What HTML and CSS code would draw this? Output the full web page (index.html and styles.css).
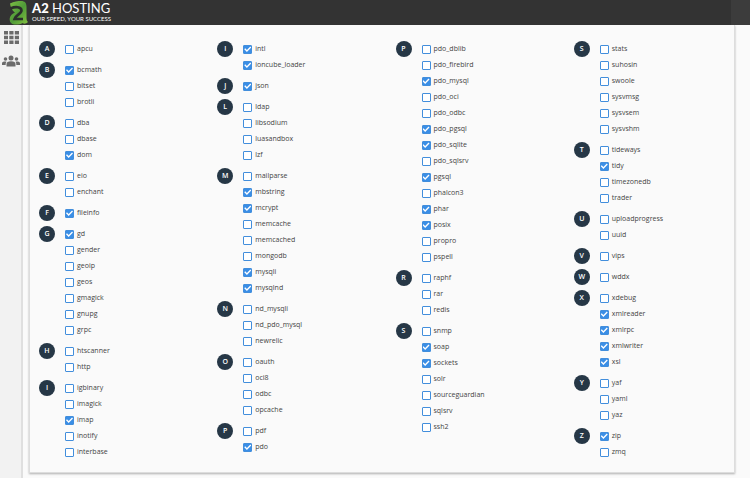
FILE: index.html
```html
<!DOCTYPE html>
<html lang="en">
<head>
    <meta charset="UTF-8">
    <meta name="viewport" content="width=device-width, initial-scale=1.0">
    <title>A2 Hosting - PHP Extensions</title>
    <link rel="stylesheet" href="styles.css">
</head>
<body>
    <header class="topbar">
        <a class="brand" href="#">
            <svg class="brand-mark" viewBox="0 0 20 25" aria-hidden="true">
                <defs>
                    <linearGradient id="leaf" x1="0" y1="0" x2="1" y2="1">
                        <stop offset="0" stop-color="#7fbf45"/>
                        <stop offset="0.5" stop-color="#4f9a38"/>
                        <stop offset="1" stop-color="#86c440"/>
                    </linearGradient>
                </defs>
                <path fill="url(#leaf)" d="M1 3.500C5 1.500 9 1 12 1C16 1 17.500 3 17.500 7V18C17.500 20 18 21 19 22C17 24 15 24 13.500 23C11 24.600 6 25 3.500 24C1 23 0.300 20.500 0.800 18C1.300 15.500 3.500 13.500 6 12.500C4 11 2 9 1 3.500Z"/>
                <path fill="none" stroke="#2b2f2b" stroke-width="2.600" d="M1.500 8.500C6 6.500 12.500 6.500 12.500 10.500C12.500 14 6.500 15 5.500 19H14"/>
            </svg>
            <span class="brand-text">
                <span class="brand-name"><b>A2</b> HOSTING</span>
                <span class="brand-tagline">OUR SPEED, YOUR SUCCESS</span>
            </span>
        </a>
        <div class="topbar-end"></div>
    </header>
    <div class="page">
        <nav class="sidebar">
            <a href="#" aria-label="Tools">
                <svg width="15" height="13" viewBox="0 0 15 13" fill="#6b6b6b">
                    <path d="M0 0h4v3.500H0zM5.300 0h4.200v3.500H5.300zM10.800 0H15v3.500h-4.200zM0 4.700h4v3.500H0zM5.300 4.700h4.200v3.500H5.300zM10.800 4.700H15v3.500h-4.200zM0 9.400h4V13H0zM5.300 9.400h4.200V13H5.300zM10.800 9.400H15V13h-4.200z"/>
                </svg>
            </a>
            <a href="#" aria-label="Users">
                <svg width="18" height="12" viewBox="0 0 18 12" fill="#6b6b6b">
                    <circle cx="9" cy="3" r="2.500"/>
                    <circle cx="3.500" cy="4" r="1.800"/>
                    <circle cx="14.500" cy="4" r="1.800"/>
                    <path d="M4.500 11.500V9C4.500 7 6 6.200 9 6.200S13.500 7 13.500 9V11.500Z"/>
                    <path d="M0 10V8.500C0 7 1 6.500 3.500 6.500L4.500 6.700C3.800 7.500 3.600 8.500 3.700 10ZM18 10V8.500C18 7 17 6.500 14.500 6.500L13.500 6.700C14.200 7.500 14.400 8.500 14.300 10Z"/>
                </svg>
            </a>
        </nav>
        <main class="content">
            <form class="card">
                <div class="column">
                    <section class="group">
                        <h2 class="letter">A</h2>
                        <div class="items">
                            <label><input type="checkbox">apcu</label>
                        </div>
                    </section>
                    <section class="group">
                        <h2 class="letter">B</h2>
                        <div class="items">
                            <label><input type="checkbox" checked>bcmath</label>
                            <label><input type="checkbox">bitset</label>
                            <label><input type="checkbox">brotli</label>
                        </div>
                    </section>
                    <section class="group">
                        <h2 class="letter">D</h2>
                        <div class="items">
                            <label><input type="checkbox">dba</label>
                            <label><input type="checkbox">dbase</label>
                            <label><input type="checkbox" checked>dom</label>
                        </div>
                    </section>
                    <section class="group">
                        <h2 class="letter">E</h2>
                        <div class="items">
                            <label><input type="checkbox">eio</label>
                            <label><input type="checkbox">enchant</label>
                        </div>
                    </section>
                    <section class="group">
                        <h2 class="letter">F</h2>
                        <div class="items">
                            <label><input type="checkbox" checked>fileinfo</label>
                        </div>
                    </section>
                    <section class="group">
                        <h2 class="letter">G</h2>
                        <div class="items">
                            <label><input type="checkbox" checked>gd</label>
                            <label><input type="checkbox">gender</label>
                            <label><input type="checkbox">geoip</label>
                            <label><input type="checkbox">geos</label>
                            <label><input type="checkbox">gmagick</label>
                            <label><input type="checkbox">gnupg</label>
                            <label><input type="checkbox">grpc</label>
                        </div>
                    </section>
                    <section class="group">
                        <h2 class="letter">H</h2>
                        <div class="items">
                            <label><input type="checkbox">htscanner</label>
                            <label><input type="checkbox">http</label>
                        </div>
                    </section>
                    <section class="group">
                        <h2 class="letter">I</h2>
                        <div class="items">
                            <label><input type="checkbox">igbinary</label>
                            <label><input type="checkbox">imagick</label>
                            <label><input type="checkbox" checked>imap</label>
                            <label><input type="checkbox">inotify</label>
                            <label><input type="checkbox">interbase</label>
                        </div>
                    </section>
                </div>
                <div class="column">
                    <section class="group">
                        <h2 class="letter">I</h2>
                        <div class="items">
                            <label><input type="checkbox" checked>intl</label>
                            <label><input type="checkbox" checked>ioncube_loader</label>
                        </div>
                    </section>
                    <section class="group">
                        <h2 class="letter">J</h2>
                        <div class="items">
                            <label><input type="checkbox" checked>json</label>
                        </div>
                    </section>
                    <section class="group">
                        <h2 class="letter">L</h2>
                        <div class="items">
                            <label><input type="checkbox">ldap</label>
                            <label><input type="checkbox">libsodium</label>
                            <label><input type="checkbox">luasandbox</label>
                            <label><input type="checkbox">lzf</label>
                        </div>
                    </section>
                    <section class="group">
                        <h2 class="letter">M</h2>
                        <div class="items">
                            <label><input type="checkbox">mailparse</label>
                            <label><input type="checkbox" checked>mbstring</label>
                            <label><input type="checkbox" checked>mcrypt</label>
                            <label><input type="checkbox">memcache</label>
                            <label><input type="checkbox">memcached</label>
                            <label><input type="checkbox">mongodb</label>
                            <label><input type="checkbox" checked>mysqli</label>
                            <label><input type="checkbox" checked>mysqlnd</label>
                        </div>
                    </section>
                    <section class="group">
                        <h2 class="letter">N</h2>
                        <div class="items">
                            <label><input type="checkbox">nd_mysqli</label>
                            <label><input type="checkbox">nd_pdo_mysql</label>
                            <label><input type="checkbox">newrelic</label>
                        </div>
                    </section>
                    <section class="group">
                        <h2 class="letter">O</h2>
                        <div class="items">
                            <label><input type="checkbox">oauth</label>
                            <label><input type="checkbox">oci8</label>
                            <label><input type="checkbox">odbc</label>
                            <label><input type="checkbox">opcache</label>
                        </div>
                    </section>
                    <section class="group">
                        <h2 class="letter">P</h2>
                        <div class="items">
                            <label><input type="checkbox">pdf</label>
                            <label><input type="checkbox" checked>pdo</label>
                        </div>
                    </section>
                </div>
                <div class="column">
                    <section class="group">
                        <h2 class="letter">P</h2>
                        <div class="items">
                            <label><input type="checkbox">pdo_dblib</label>
                            <label><input type="checkbox">pdo_firebird</label>
                            <label><input type="checkbox" checked>pdo_mysql</label>
                            <label><input type="checkbox">pdo_oci</label>
                            <label><input type="checkbox">pdo_odbc</label>
                            <label><input type="checkbox" checked>pdo_pgsql</label>
                            <label><input type="checkbox" checked>pdo_sqlite</label>
                            <label><input type="checkbox">pdo_sqlsrv</label>
                            <label><input type="checkbox" checked>pgsql</label>
                            <label><input type="checkbox">phalcon3</label>
                            <label><input type="checkbox" checked>phar</label>
                            <label><input type="checkbox" checked>posix</label>
                            <label><input type="checkbox">propro</label>
                            <label><input type="checkbox">pspell</label>
                        </div>
                    </section>
                    <section class="group">
                        <h2 class="letter">R</h2>
                        <div class="items">
                            <label><input type="checkbox">raphf</label>
                            <label><input type="checkbox">rar</label>
                            <label><input type="checkbox">redis</label>
                        </div>
                    </section>
                    <section class="group">
                        <h2 class="letter">S</h2>
                        <div class="items">
                            <label><input type="checkbox">snmp</label>
                            <label><input type="checkbox" checked>soap</label>
                            <label><input type="checkbox" checked>sockets</label>
                            <label><input type="checkbox">solr</label>
                            <label><input type="checkbox">sourceguardian</label>
                            <label><input type="checkbox">sqlsrv</label>
                            <label><input type="checkbox">ssh2</label>
                        </div>
                    </section>
                </div>
                <div class="column">
                    <section class="group">
                        <h2 class="letter">S</h2>
                        <div class="items">
                            <label><input type="checkbox">stats</label>
                            <label><input type="checkbox">suhosin</label>
                            <label><input type="checkbox">swoole</label>
                            <label><input type="checkbox">sysvmsg</label>
                            <label><input type="checkbox">sysvsem</label>
                            <label><input type="checkbox">sysvshm</label>
                        </div>
                    </section>
                    <section class="group">
                        <h2 class="letter">T</h2>
                        <div class="items">
                            <label><input type="checkbox">tideways</label>
                            <label><input type="checkbox" checked>tidy</label>
                            <label><input type="checkbox">timezonedb</label>
                            <label><input type="checkbox">trader</label>
                        </div>
                    </section>
                    <section class="group">
                        <h2 class="letter">U</h2>
                        <div class="items">
                            <label><input type="checkbox">uploadprogress</label>
                            <label><input type="checkbox">uuid</label>
                        </div>
                    </section>
                    <section class="group">
                        <h2 class="letter">V</h2>
                        <div class="items">
                            <label><input type="checkbox">vips</label>
                        </div>
                    </section>
                    <section class="group">
                        <h2 class="letter">W</h2>
                        <div class="items">
                            <label><input type="checkbox">wddx</label>
                        </div>
                    </section>
                    <section class="group">
                        <h2 class="letter">X</h2>
                        <div class="items">
                            <label><input type="checkbox">xdebug</label>
                            <label><input type="checkbox" checked>xmlreader</label>
                            <label><input type="checkbox" checked>xmlrpc</label>
                            <label><input type="checkbox" checked>xmlwriter</label>
                            <label><input type="checkbox" checked>xsl</label>
                        </div>
                    </section>
                    <section class="group">
                        <h2 class="letter">Y</h2>
                        <div class="items">
                            <label><input type="checkbox">yaf</label>
                            <label><input type="checkbox">yaml</label>
                            <label><input type="checkbox">yaz</label>
                        </div>
                    </section>
                    <section class="group">
                        <h2 class="letter">Z</h2>
                        <div class="items">
                            <label><input type="checkbox" checked>zip</label>
                            <label><input type="checkbox">zmq</label>
                        </div>
                    </section>
                </div>
            </form>
        </main>
    </div>
</body>
</html>
```

FILE: styles.css
```css
* {
    box-sizing: border-box;
}
body {
    margin: 0;
    min-height: 100vh;
    display: flex;
    flex-direction: column;
    font-family: "Open Sans", "Noto Sans", sans-serif;
    font-size: 7px;
    color: #444;
    background: #fafafa;
}
.topbar {
    display: flex;
    justify-content: space-between;
    height: 25px;
    background: #333;
}
.topbar-end {
    width: 19px;
    background: #3c3c3c;
}
.brand {
    display: flex;
    gap: 3px;
    padding-left: 9px;
    color: #fff;
    text-decoration: none;
}
.brand-mark {
    width: 20px;
    height: 25px;
}
.brand-text {
    display: flex;
    flex-direction: column;
    padding-top: 1px;
    font-family: Lato, sans-serif;
    white-space: nowrap;
}
.brand-name {
    font-size: 13px;
    line-height: 15px;
}
.brand-name b {
    font-weight: 900;
}
.brand-tagline {
    font-size: 6px;
    line-height: 6px;
    font-weight: 400;
}
.page {
    flex: 1;
    display: flex;
}
.sidebar {
    display: flex;
    flex-direction: column;
    align-items: center;
    gap: 11px;
    width: 23px;
    padding: 6px 0 0 1px;
    background: #f2f2f2;
    border-right: 2px solid #dfdfdf;
}
.sidebar a,
.sidebar svg {
    display: block;
}
.content {
    flex: 1;
    padding: 0 15px 5px 6px;
}
.card {
    display: grid;
    grid-template-columns: repeat(4, 1fr);
    gap: 30px;
    height: 100%;
    padding: 16px 12px 12px 9px;
    background: #fafafa;
    border: 1px solid #ddd;
    border-top: 0;
    box-shadow: 0 1px 2px rgba(0, 0, 0, 0.3);
    clip-path: inset(0 -4px -4px -4px);
}
.column {
    display: flex;
    flex-direction: column;
    gap: 5px;
}
.group {
    display: flex;
    gap: 10px;
}
.letter {
    width: 16px;
    height: 16px;
    margin: 0;
    border-radius: 50%;
    background: #263746;
    color: #fff;
    font-size: 7px;
    font-weight: 600;
    line-height: 16px;
    text-align: center;
}
.items label {
    display: flex;
    align-items: center;
    gap: 3px;
    height: 16px;
    line-height: 16px;
    cursor: pointer;
}
.items input {
    appearance: none;
    display: grid;
    place-items: center;
    width: 9px;
    height: 9px;
    margin: 0;
    border: 1px solid #428edc;
    border-radius: 1px;
    background: #fff;
    cursor: pointer;
}
.items input:checked {
    background: #3a8ee6;
}
.items input:checked::after {
    content: "";
    width: 7px;
    height: 7px;
    background: #fff;
    clip-path: polygon(0 55%, 14% 40%, 38% 64%, 86% 14%, 100% 28%, 38% 92%);
}
```
